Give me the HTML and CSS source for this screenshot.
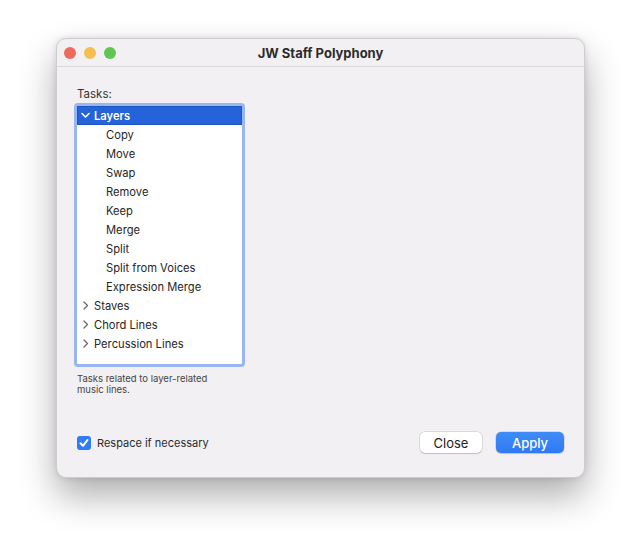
FILE: index.html
```html
<!DOCTYPE html>
<html lang="en">

<head>
  <meta charset="UTF-8" />
  <meta name="viewport" content="width=device-width, initial-scale=1.0" />
  <title>JW Staff Polyphony</title>
  <link rel="stylesheet" href="styles.css">
</head>

<body>
  <div class="window">

    <!-- 标题栏 -->
    <div class="titlebar">
      <div class="lights">
        <span class="light red"></span>
        <span class="light yellow"></span>
        <span class="light green"></span>
      </div>
      <div class="title">JW Staff Polyphony</div>
    </div>

    <div class="content">
      <div class="label">Tasks:</div>

      <!-- 任务列表 -->
      <ul class="tree">
        <li class="row top selected">
          <svg class="arrow" width="11" height="11" viewBox="0 0 11 11"><path d="M2 3.5 L5.5 7 L9 3.5" fill="none" stroke="#fff" stroke-width="1.6" stroke-linecap="round" stroke-linejoin="round"/></svg>
          <span>Layers</span>
        </li>
        <li class="row child">Copy</li>
        <li class="row child">Move</li>
        <li class="row child">Swap</li>
        <li class="row child">Remove</li>
        <li class="row child">Keep</li>
        <li class="row child">Merge</li>
        <li class="row child">Split</li>
        <li class="row child">Split from Voices</li>
        <li class="row child">Expression Merge</li>
        <li class="row top">
          <svg class="arrow" width="11" height="11" viewBox="0 0 11 11"><path d="M4 2 L7.5 5.5 L4 9" fill="none" stroke="#6a6a6a" stroke-width="1.3" stroke-linecap="round" stroke-linejoin="round"/></svg>
          <span>Staves</span>
        </li>
        <li class="row top">
          <svg class="arrow" width="11" height="11" viewBox="0 0 11 11"><path d="M4 2 L7.5 5.5 L4 9" fill="none" stroke="#6a6a6a" stroke-width="1.3" stroke-linecap="round" stroke-linejoin="round"/></svg>
          <span>Chord Lines</span>
        </li>
        <li class="row top">
          <svg class="arrow" width="11" height="11" viewBox="0 0 11 11"><path d="M4 2 L7.5 5.5 L4 9" fill="none" stroke="#6a6a6a" stroke-width="1.3" stroke-linecap="round" stroke-linejoin="round"/></svg>
          <span>Percussion Lines</span>
        </li>
      </ul>

      <p class="desc">Tasks related to layer-related music lines.</p>

      <!-- 底部操作 -->
      <div class="footer">
        <label class="check">
          <span class="box">
            <svg width="14" height="14" viewBox="0 0 14 14"><path d="M3.5 7.3 L6 9.8 L10.5 4" fill="none" stroke="#fff" stroke-width="2" stroke-linecap="round" stroke-linejoin="round"/></svg>
          </span>
          <span>Respace if necessary</span>
        </label>
        <div class="buttons">
          <button class="btn">Close</button>
          <button class="btn primary">Apply</button>
        </div>
      </div>
    </div>

  </div>
</body>

</html>
```

FILE: styles.css
```css
* {
  margin: 0;
  padding: 0;
  box-sizing: border-box;
}

html,
body {
  background: #fff;
}

body {
  min-height: 552px;
  padding: 38px 0 75px 56px;
  font-family: Inter, "Liberation Sans", sans-serif;
  color: #222;
}

ul {
  list-style: none;
}

.window {
  width: 529px;
  height: 440px;
  background: #f3f0f3;
  border: 1px solid #cfcccf;
  border-radius: 10px;
  box-shadow: 0 18px 36px rgba(0, 0, 0, 0.32), 0 0 6px rgba(0, 0, 0, 0.12);
  display: flex;
  flex-direction: column;
  overflow: hidden;
}

.titlebar {
  height: 28px;
  border-bottom: 1px solid #dcd9dc;
  display: flex;
  align-items: center;
  position: relative;
}

.lights {
  display: flex;
  gap: 8px;
  padding-left: 7px;
}

.light {
  width: 12px;
  height: 12px;
  border-radius: 50%;
}

.red {
  background: #ee6a5e;
}

.yellow {
  background: #f5bf4f;
}

.green {
  background: #61c554;
}

.title {
  position: absolute;
  left: 0;
  right: 0;
  text-align: center;
  font-size: 13px;
  font-weight: 700;
  color: #2b2b2b;
}

.content {
  flex: 1;
  display: flex;
  flex-direction: column;
  padding: 20px 20px 24px 19px;
}

.label {
  font-size: 11.5px;
  color: #333;
  line-height: 14px;
  margin-bottom: 2px;
  padding-left: 1px;
}

.tree {
  width: 171px;
  height: 264px;
  margin-left: -2px;
  background: #fff;
  border: 3px solid #98b6f1;
  border-radius: 4px;
  overflow: hidden;
}

.row {
  height: 19px;
  display: flex;
  align-items: center;
  font-size: 11.2px;
  color: #262626;
  white-space: nowrap;
}

.row.top {
  padding-left: 3px;
}

.row .arrow {
  margin-right: 3px;
}

.row.child {
  padding-left: 29px;
}

.row.selected {
  background: #2463d9;
  color: #fff;
  font-weight: 600;
  border: 1px solid #1f55bf;
  padding-left: 2px;
}

.desc {
  width: 160px;
  margin-top: 6px;
  font-size: 9.5px;
  line-height: 11px;
  color: #444;
  padding-left: 1px;
}

.footer {
  margin-top: auto;
  display: flex;
  align-items: center;
  justify-content: space-between;
}

.check {
  display: flex;
  align-items: center;
  gap: 6px;
  font-size: 11px;
  color: #2a2a2a;
  padding-left: 1px;
}

.check .box {
  width: 14px;
  height: 14px;
  border-radius: 3px;
  background: #2e7cf6;
  display: flex;
}

.buttons {
  display: flex;
  gap: 14px;
}

.btn {
  height: 21px;
  width: 62px;
  border: none;
  border-radius: 5px;
  background: #fff;
  font: 13px Inter, "Liberation Sans", sans-serif;
  color: #222;
  box-shadow: 0 0 0 0.5px rgba(0, 0, 0, 0.18), 0 1px 1px rgba(0, 0, 0, 0.12);
}

.btn.primary {
  width: 68px;
  background: linear-gradient(#3f8cf8, #2f79f4);
  color: #fff;
  font-weight: 500;
}
```
